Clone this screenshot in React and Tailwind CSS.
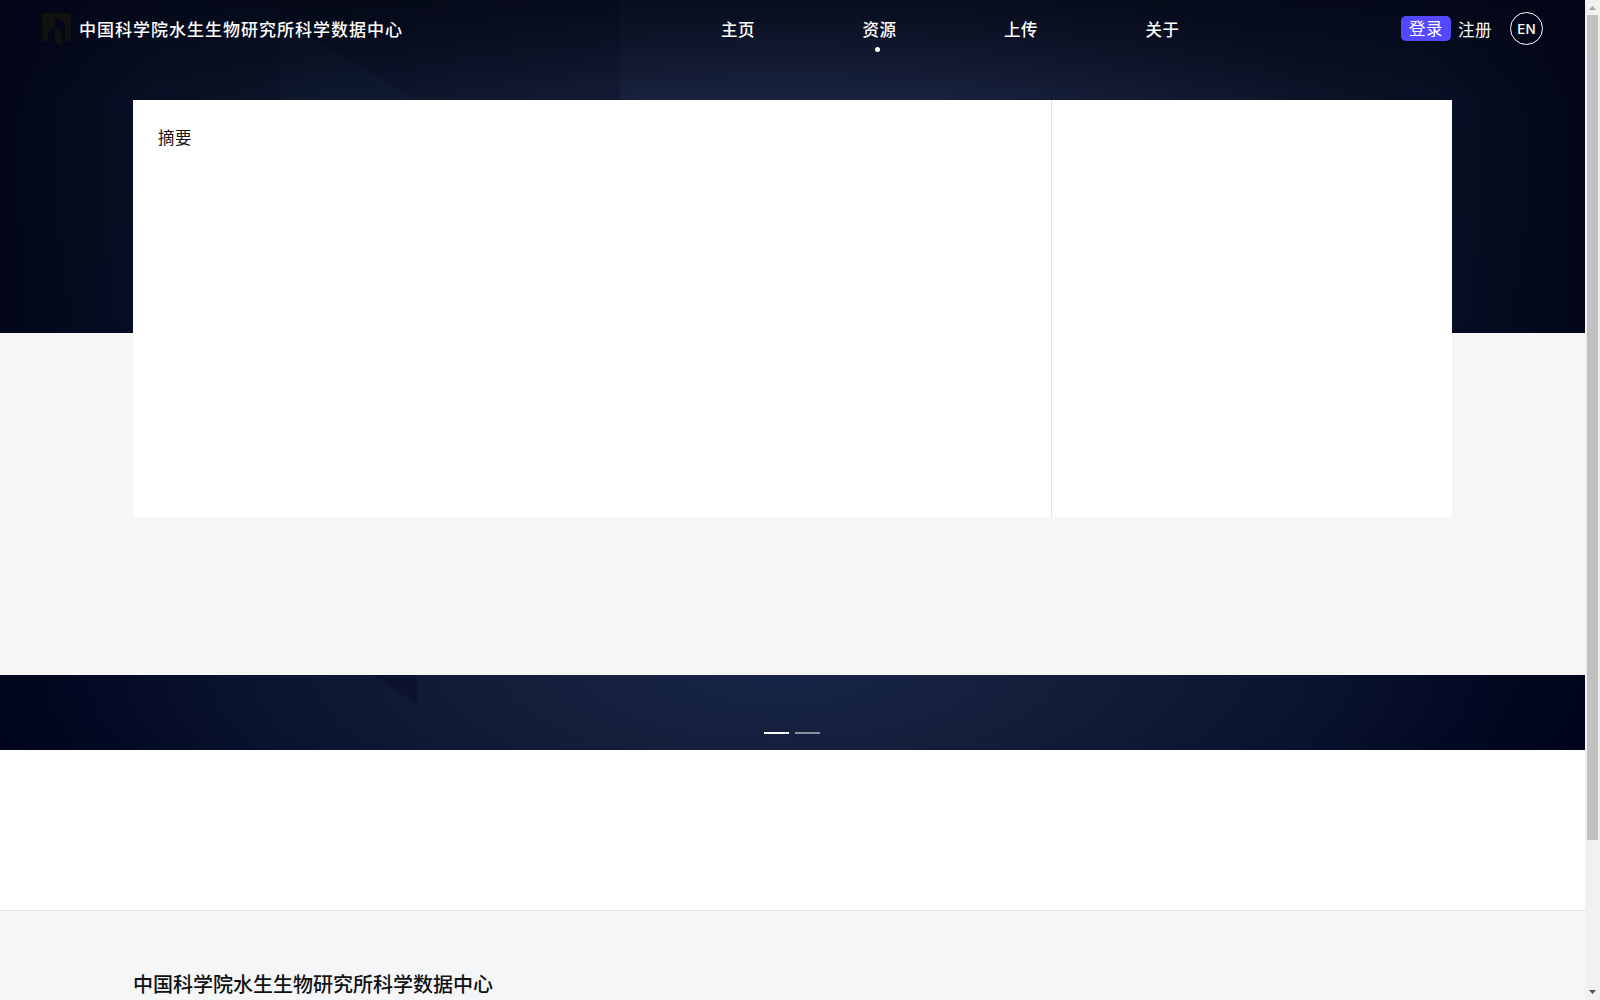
import clsx from 'clsx'

const SITE_NAME = '中国科学院水生生物研究所科学数据中心'

const navItems = [
  { label: '主页' },
  { label: '资源', active: true },
  { label: '上传' },
  { label: '关于' },
]

function Logo() {
  return (
    <svg width="30" height="34" viewBox="0 0 30 34" className="mt-0.5 shrink-0">
      <path
        fill="#11120f"
        d="M3 0H26Q29 0 29 3V26Q29 29 26 29H23V13Q23 10 20 8L13 4V14Q6 17 6 22V26Q6 29 3 29Q0 29 0 26V3Q0 0 3 0Z"
      />
      <path fill="#11120f" d="M13 14L20 18V33L13 29Z" />
    </svg>
  )
}

function Header() {
  return (
    <header className="flex h-[58px] items-center pl-[42px] pr-[42px] text-white">
      <Logo />
      <div className="ml-[7px] w-[634px] pt-0.5 text-[17px] leading-6 font-medium tracking-[1px]">{SITE_NAME}</div>

      <nav className="flex pt-0.5">
        {navItems.map((item) => (
          <div key={item.label} className="relative w-[141.5px] pl-2">
            <span className="text-[16.5px] leading-6 font-medium tracking-[0.5px]">{item.label}</span>
            {item.active && (
              <span className="absolute left-[20.5px] top-[29px] h-[5px] w-[5px] rounded-full bg-white" />
            )}
          </div>
        ))}
      </nav>

      <div className="-mt-px ml-auto flex items-center text-[16.5px] tracking-[0.5px]">
        <button className="h-[25px] w-[50px] rounded-[5px] bg-[#5549ff] leading-[24px] tracking-[0.5px]">登录</button>
        <span className="ml-[7px] pt-[3px] leading-6">注册</span>
        <span className="ml-[18px] flex h-[33px] w-[33px] items-center justify-center rounded-full border border-white pt-0.5 font-['Inter',sans-serif] text-[13.5px] font-medium tracking-normal">
          EN
        </span>
      </div>
    </header>
  )
}

function Hero() {
  return (
    <div className="relative h-[333px] shrink-0 bg-[radial-gradient(ellipse_800px_290px_at_790px_170px,#1f2b4b_0%,#161f39_40%,#0a1226_75%,#070e24_100%)]">
      <svg className="absolute inset-0" width="1585" height="333">
        <defs>
          <linearGradient id="topShade" x1="0" y1="0" x2="0" y2="1">
            <stop offset="0" stopColor="#02040f" stopOpacity="0.5" />
            <stop offset="1" stopColor="#02040f" stopOpacity="0" />
          </linearGradient>
          <linearGradient id="sideShade" x1="0" y1="0" x2="1" y2="0">
            <stop offset="0" stopColor="#010314" stopOpacity="0.7" />
            <stop offset="0.1" stopColor="#010314" stopOpacity="0" />
            <stop offset="0.9" stopColor="#010314" stopOpacity="0" />
            <stop offset="1" stopColor="#010314" stopOpacity="0.7" />
          </linearGradient>
        </defs>
        <path d="M279 0H620V333H279Z" fill="#060b1b" fillOpacity="0.22" />
        <path d="M279 19L417 100V333H279Z" fill="#1b2c48" fillOpacity="0.2" />
        <rect width="1585" height="100" fill="url(#topShade)" />
        <rect width="1585" height="333" fill="url(#sideShade)" />
      </svg>
      <div className="relative">
        <Header />
      </div>
    </div>
  )
}

function Detail() {
  return (
    <section className="relative mx-[133px] -mt-[233px] flex h-[417px] w-[1319px] shrink-0 bg-white">
      <div className="w-[919px] border-r border-[#e2e2e2] px-[25px] pt-[26px]">
        <h2 className="text-[16.5px] leading-6 tracking-[0.5px] text-[#111]">摘要</h2>
      </div>
      <div className="flex-1" />
    </section>
  )
}

function Banner() {
  return (
    <div className="relative mt-[158px] flex h-[75px] shrink-0 justify-center bg-[radial-gradient(ellipse_820px_300px_at_780px_-10px,#172547_0%,#151f3c_30%,#0b1532_62%,#030922_86%,#00031c_100%)]">
      <svg className="absolute top-0 left-0" width="420" height="75">
        <path d="M373 0H417V30Z" fill="#080f2b" fillOpacity="0.6" />
      </svg>
      <div className="flex gap-1.5 pt-[57px] pr-px">
        <span className="h-0.5 w-[25px] bg-white" />
        <span className="h-0.5 w-[25px] bg-white/50" />
      </div>
    </div>
  )
}

function Scrollbar() {
  return (
    <div className="flex w-[15px] flex-col items-center bg-[#f1f1f1]">
      <svg width="15" height="15" className="shrink-0">
        <path d="M4 10H11L7.5 6Z" fill="#a3a3a3" />
      </svg>
      <div className="h-[825px] w-[11px] bg-[#c1c1c1]" />
      <svg width="15" height="15" className="mt-auto shrink-0">
        <path d="M4 5H11L7.5 9Z" fill="#505050" />
      </svg>
    </div>
  )
}

export default function App() {
  return (
    <div className={clsx('flex h-[1000px] w-[1600px] overflow-hidden', "font-['Noto_Sans','Noto_Sans_CJK_SC',sans-serif]")}>
      <main className="flex w-[1585px] flex-col overflow-hidden bg-[#f6f6f6]">
        <Hero />
        <Detail />
        <Banner />
        <div className="h-40 shrink-0 bg-white" />
        <footer className="h-[90px] shrink-0 border-t border-[#e1e1e1] bg-[#f5f6f8] px-[133px] pt-[58px]">
          <h3 className="text-[20px] leading-8 font-medium text-[#111]">{SITE_NAME}</h3>
        </footer>
      </main>
      <Scrollbar />
    </div>
  )
}
